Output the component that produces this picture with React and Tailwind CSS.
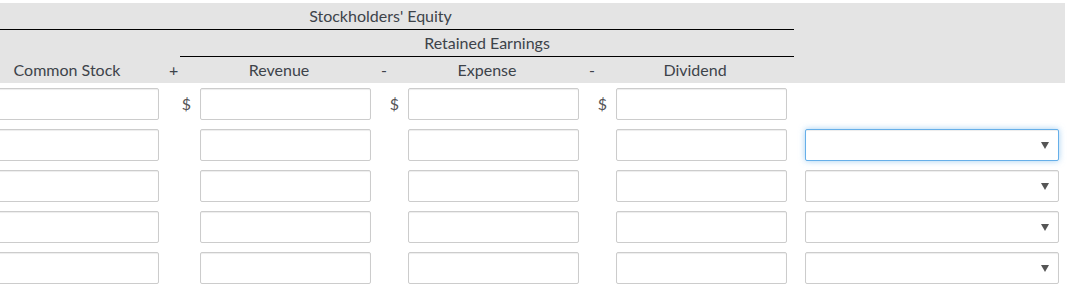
const font = { fontFamily: 'Lato, "Open Sans", sans-serif' }

const rows = [0, 1, 2, 3, 4]

const inputCls =
  'h-[32px] w-[171px] rounded-[2px] border border-[#cccccc] bg-white shadow-[inset_0_1px_1px_rgba(0,0,0,0.075)] outline-none'

const Arrow = () => (
  <svg width="8" height="7" viewBox="0 0 8 7" className="absolute right-[9px] top-[12px]">
    <path d="M0 0 H8 L4 7 Z" fill="#555555" />
  </svg>
)

const Dollar = ({ show }) => (
  <div className="flex h-[32px] items-center justify-end pr-[9px] text-[16px] text-[#555555]">
    {show ? '$' : ''}
  </div>
)

const Op = ({ sign }) => (
  <div className="flex items-center pl-[10px] text-[16px]">{sign}</div>
)

const EquityTable = () => {
  return (
    <div className="pt-[3px] text-[#3d434a]" style={font}>
      {/* header band */}
      <div className="w-[1065px] bg-[#e4e4e4]">
        <div className="flex h-[27px] w-[794px] items-center justify-center border-b border-black pr-[33px] text-[16px]">
          Stockholders' Equity
        </div>
        <div className="ml-[180px] flex h-[27px] w-[614px] items-center justify-center border-b border-black text-[16px]">
          Retained Earnings
        </div>
        <div className="grid h-[26px] grid-cols-[159px_41px_171px_37px_171px_37px_171px] text-[16px]">
          <div className="flex items-center justify-center pr-[25px]">Common Stock</div>
          <Op sign="+" />
          <div className="flex items-center justify-center pr-[13px]">Revenue</div>
          <Op sign="-" />
          <div className="flex items-center justify-center pr-[13px]">Expense</div>
          <Op sign="-" />
          <div className="flex items-center justify-center pr-[13px]">Dividend</div>
        </div>
      </div>

      {/* input rows */}
      <div className="flex flex-col gap-[9px] pt-[5px]">
        {rows.map((r) => (
          <div
            key={r}
            className="grid grid-cols-[159px_41px_171px_37px_171px_37px_171px_18px_254px]"
          >
            <div className="flex justify-end">
              <input className={`${inputCls} shrink-0`} />
            </div>
            <Dollar show={r === 0} />
            <input className={inputCls} />
            <Dollar show={r === 0} />
            <input className={inputCls} />
            <Dollar show={r === 0} />
            <input className={inputCls} />
            <div />
            {r === 0 ? (
              <div />
            ) : (
              <div
                className={
                  r === 1
                    ? 'relative h-[32px] w-[254px] rounded-[2px] border border-[#66afe9] bg-white shadow-[inset_0_1px_1px_rgba(0,0,0,0.075),0_0_6px_rgba(102,175,233,0.6)]'
                    : 'relative h-[32px] w-[254px] rounded-[2px] border border-[#cccccc] bg-white shadow-[inset_0_1px_1px_rgba(0,0,0,0.075)]'
                }
              >
                <Arrow />
              </div>
            )}
          </div>
        ))}
      </div>
    </div>
  )
}

export default function App() {
  return (
    <div className="h-[302px] w-[1070px] overflow-hidden bg-white">
      <EquityTable />
    </div>
  )
}
